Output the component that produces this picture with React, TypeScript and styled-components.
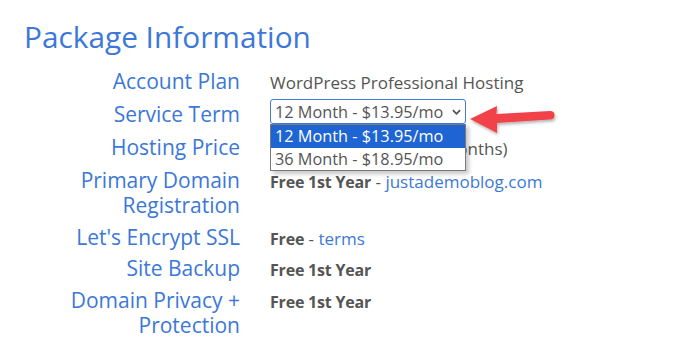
import React from 'react'
import styled, { createGlobalStyle } from 'styled-components'

const GlobalStyle = createGlobalStyle`
  html, body {
    margin: 0;
    padding: 0;
    background: #ffffff;
  }
`

type Row = {
  label: string[]
  kind: 'plain' | 'select' | 'link' | 'bold'
  text?: string
  bold?: string
  link?: string
  extra?: number
}

const rows: Row[] = [
  { label: ['Account Plan'], kind: 'plain', text: 'WordPress Professional Hosting', extra: 1.5 },
  { label: ['Service Term'], kind: 'select', extra: 1.5 },
  { label: ['Hosting Price'], kind: 'plain', text: '$167.40 (Billed for 12 months)', extra: 1.5 },
  { label: ['Primary Domain', 'Registration'], kind: 'link', bold: 'Free 1st Year', link: 'justademoblog.com', extra: 0.5 },
  { label: ["Let's Encrypt SSL"], kind: 'link', bold: 'Free', link: 'terms' },
  { label: ['Site Backup'], kind: 'bold', bold: 'Free 1st Year', extra: 0.5 },
  { label: ['Domain Privacy +', 'Protection'], kind: 'bold', bold: 'Free 1st Year' },
]

const options = ['12 Month - $13.95/mo', '36 Month - $18.95/mo']

const App: React.FC = () => {
  return (
    <Page>
      <GlobalStyle />
      <Title>Package Information</Title>
      <InfoGrid>
        {rows.map((row) => (
          <React.Fragment key={row.label[0]}>
            <Label extra={row.extra}>
              {row.label.map((l) => (
                <div key={l}>{l}</div>
              ))}
            </Label>
            {row.kind === 'select' ? (
              <SelectWrap>
                <FakeSelect>
                  <span>{options[0]}</span>
                  <Chevron viewBox='0 0 10 6'>
                    <path d='M1 1l4 4 4-4' fill='none' stroke='#555' strokeWidth='2' />
                  </Chevron>
                </FakeSelect>
                <OptionList>
                  {options.map((o, i) => (
                    <Option key={o} active={i === 0}>
                      {o}
                    </Option>
                  ))}
                </OptionList>
                <Pointer viewBox='0 0 90 36' width='90' height='36'>
                  <defs>
                    <filter id='shadow' x='-10%' y='-20%' width='130%' height='160%'>
                      <feDropShadow dx='1' dy='2' stdDeviation='1.5' floodColor='#000' floodOpacity='0.3' />
                    </filter>
                  </defs>
                  <path
                    d='M2 17 L29 4 L28.5 12 L82 9 Q86.5 9 86.5 13 Q86.5 17.5 82 17.5 L29 21 L29 31 Z'
                    fill='#f2424a'
                    filter='url(#shadow)'
                  />
                </Pointer>
              </SelectWrap>
            ) : (
              <Value>
                {row.kind === 'plain' && row.text}
                {row.kind === 'link' && (
                  <>
                    <b>{row.bold}</b> - <Link>{row.link}</Link>
                  </>
                )}
                {row.kind === 'bold' && <b>{row.bold}</b>}
              </Value>
            )}
          </React.Fragment>
        ))}
      </InfoGrid>
    </Page>
  )
}

const Page = styled.div`
  padding: 16.5px 0 0 24px;
  width: 667px;
  height: 340px;
  overflow: hidden;
`
const Title = styled.h2`
  margin: 0 0 12px 0;
  font-family: 'Open Sans', sans-serif;
  font-weight: 400;
  font-size: 29.8px;
  line-height: 40px;
  color: #3b78d8;
`
const InfoGrid = styled.div`
  display: grid;
  grid-template-columns: 216px auto;
  column-gap: 30px;
  row-gap: 6.5px;
  align-items: baseline;
`
const Label = styled.div<{ extra?: number }>`
  text-align: right;
  font-family: 'Open Sans', sans-serif;
  font-size: 21px;
  line-height: 25px;
  color: #3b78d8;
  margin-bottom: ${(p) => p.extra || 0}px;
`
const Value = styled.div`
  font-family: 'Open Sans', sans-serif;
  font-size: 17px;
  line-height: 20px;
  color: #555555;
  b {
    font-size: 16px;
    font-weight: 700;
    letter-spacing: -0.2px;
  }
`
const Link = styled.span`
  color: #3b78d8;
`
const SelectWrap = styled.div`
  position: relative;
  align-self: start;
  margin-top: -2.5px;
  width: 196px;
  z-index: 2;
  font-family: 'Open Sans', sans-serif;
`
const FakeSelect = styled.div`
  box-sizing: border-box;
  height: 25px;
  border: 1px solid #3f7bd8;
  border-radius: 3px;
  padding: 0 4px 0 4px;
  display: flex;
  align-items: center;
  justify-content: space-between;
  font-size: 16.3px;
  color: #555555;
  background: #fff;
`
const Chevron = styled.svg`
  width: 9px;
  height: 6px;
`
const OptionList = styled.div`
  position: absolute;
  left: 0;
  top: 25px;
  width: 196px;
  box-sizing: border-box;
  border: 1px solid #7a7a7a;
  background: #fff;
  box-shadow: 3px 3px 4px rgba(0, 0, 0, 0.22);
`
const Option = styled.div<{ active?: boolean }>`
  height: 22.5px;
  line-height: 22.5px;
  padding: 0 4px;
  font-size: 16.3px;
  color: ${(p) => (p.active ? '#ffffff' : '#555555')};
  background: ${(p) => (p.active ? '#1e64d2' : '#ffffff')};
`
const Pointer = styled.svg`
  position: absolute;
  left: 198px;
  top: 3px;
`

export default App
